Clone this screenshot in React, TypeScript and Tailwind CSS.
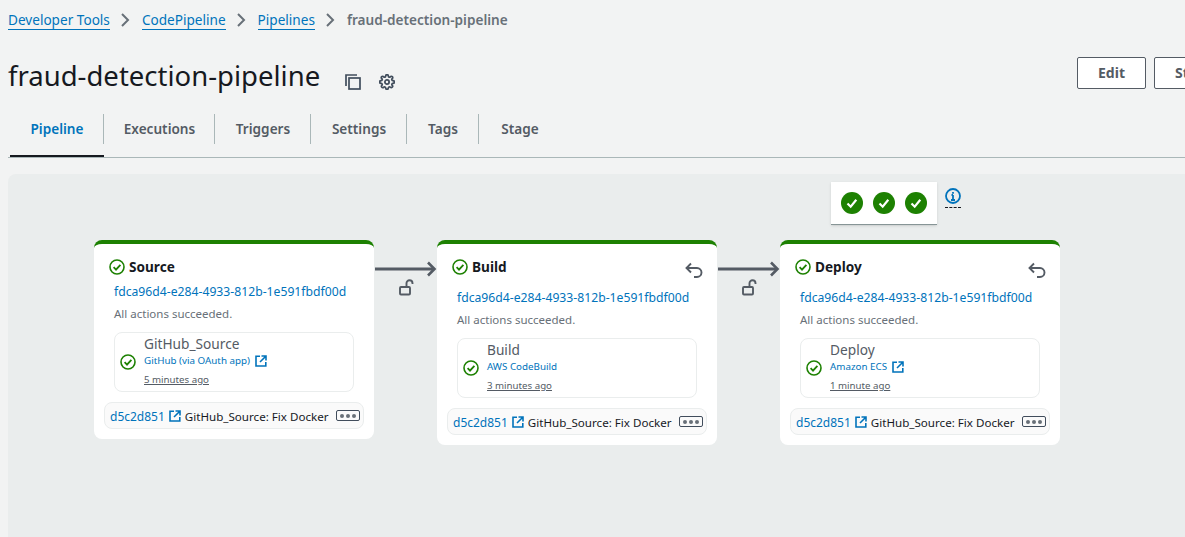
import React from "react";

const FONT = "font-['Noto_Sans','Open_Sans',sans-serif]";

const tabs = ["Pipeline", "Executions", "Triggers", "Settings", "Tags", "Stage"];
const tabWidths = ["w-[94px]", "w-[111px]", "w-[96px]", "w-[96px]", "w-[72px]", "w-[81px]"];

const stages = [
  { name: "Source", action: "GitHub_Source", provider: "GitHub (via OAuth app)", link: true, ago: "5 minutes ago", retry: false },
  { name: "Build", action: "Build", provider: "AWS CodeBuild", link: false, ago: "3 minutes ago", retry: true },
  { name: "Deploy", action: "Deploy", provider: "Amazon ECS", link: true, ago: "1 minute ago", retry: true },
];

const Chevron = () => (
  <svg width="16" height="16" viewBox="0 0 16 16" fill="none" stroke="#687078" strokeWidth="2" className="mx-[8px] shrink-0">
    <path d="M4 2l6 6-6 6" />
  </svg>
);

const CheckCircle = ({ size = 16 }: { size?: number }) => (
  <svg width={size} height={size} viewBox="0 0 16 16" fill="none" stroke="#1d8102" strokeWidth="1.6" className="shrink-0">
    <circle cx="8" cy="8" r="7" />
    <path d="M4.600 8.200l2.400 2.400 4.400-4.800" strokeWidth="1.800" />
  </svg>
);

const SolidCheck = () => (
  <svg width="22" height="22" viewBox="0 0 22 22" fill="none">
    <circle cx="11" cy="11" r="11" fill="#1d8102" />
    <path d="M6.500 11.500l3.200 3.200 5.600-7" stroke="#fff" strokeWidth="2.200" />
  </svg>
);

const External = () => (
  <svg width="12" height="12" viewBox="0 0 12 12" fill="none" stroke="#0073bb" strokeWidth="1.6" className="shrink-0">
    <path d="M5 1.200H1v9.800h9.800V7" />
    <path d="M6.500 1H11v4.500M10.800 1.200L5 7" />
  </svg>
);

const Undo = () => (
  <svg width="18" height="17" viewBox="0 0 18 17" fill="none" stroke="#545b64" strokeWidth="1.900">
    <path d="M6 1.500L1.500 6 6 10.500" />
    <path d="M1.500 6h10.500a4.500 4.500 0 0 1 0 9H9" />
  </svg>
);

const Lock = () => (
  <svg width="16" height="17" viewBox="0 0 16 17" fill="none" stroke="#545b64" strokeWidth="1.900">
    <rect x="1" y="8" width="10" height="7.500" rx="1" />
    <path d="M7.500 8V4.200a3 3 0 0 1 6 0V5" />
  </svg>
);

const Arrow = () => (
  <svg width="63" height="16" viewBox="0 0 63 16" fill="none" stroke="#545b64" strokeWidth="3">
    <path d="M1 8h59" />
    <path d="M54 1.500L60.500 8 54 14.500" strokeWidth="2.600" />
  </svg>
);

const StageCard = ({ stage }: { stage: (typeof stages)[number] }) => (
  <div className="w-[280px] shrink-0 rounded-lg border-t-4 border-[#1d8102] bg-white">
    <div className={`flex items-start pl-[15px] pr-[14px] pt-[15px] ${stage.retry ? "h-[42px]" : "h-[36px]"}`}>
      <CheckCircle />
      <span className="ml-[4px] text-[13.600px] leading-[16px] font-bold text-[#16191f]">{stage.name}</span>
      {stage.retry && (
        <span className="ml-auto mt-[3px]">
          <Undo />
        </span>
      )}
    </div>
    <div className="mt-[4px] pl-[20px] text-[12.200px] leading-[16px] whitespace-nowrap text-[#0073bb]">
      fdca96d4-e284-4933-812b-1e591fbdf00d
    </div>
    <div className="mt-[6px] pl-[20px] text-[11.500px] leading-[16px] text-[#687078]">All actions succeeded.</div>
    <div className="mx-[20px] mt-[10px] flex h-[60px] items-center rounded-lg border border-[#eaeded] pl-[5px]">
      <CheckCircle />
      <div className="ml-[8px] self-start pt-[2px]">
        <div className="mb-[1px] text-[13.700px] leading-[18px] text-[#545b64]">{stage.action}</div>
        <div className="flex items-center gap-[5px] text-[9.800px] leading-[14px] text-[#0073bb]">
          {stage.provider}
          {stage.link && <External />}
        </div>
        <div className="mt-[5px] text-[9.700px] leading-[14px] text-[#545b64] underline">{stage.ago}</div>
      </div>
    </div>
    <div className="mx-[10px] mb-[10px] mt-[10px] flex h-[27px] items-center rounded-lg border border-[#eaeded] bg-[#fafafa] pl-[5px]">
      <span className="pt-[2px] text-[12px] text-[#0073bb]">d5c2d851</span>
      <span className="ml-[4px]"><External /></span>
      <span className="ml-[4px] whitespace-nowrap pt-[2px] text-[11.600px] text-[#16191f]">GitHub_Source: Fix Docker</span>
      <span className="ml-auto mr-[3px] flex h-[11px] w-[24px] items-center justify-center gap-[2px] rounded-[2px] border border-[#414d5c]">
        <i className="size-[4px] rounded-full bg-[#687078]" />
        <i className="size-[4px] rounded-full bg-[#687078]" />
        <i className="size-[4px] rounded-full bg-[#687078]" />
      </span>
    </div>
  </div>
);

export default function App() {
  return (
    <div className={`${FONT} h-[537px] w-[1185px] overflow-hidden bg-[#f2f3f3]`}>
      <nav className="flex h-[40px] items-center pl-[8px] text-[13.600px]">
        <a className="border-b border-[#0073bb] leading-[18px] text-[#0073bb]">Developer Tools</a>
        <Chevron />
        <a className="border-b border-[#0073bb] leading-[18px] text-[#0073bb]">CodePipeline</a>
        <Chevron />
        <a className="border-b border-[#0073bb] leading-[18px] text-[#0073bb]">Pipelines</a>
        <Chevron />
        <span className="font-semibold text-[#687078]">fraud-detection-pipeline</span>
      </nav>

      <div className="flex h-[60px] w-[1300px] items-start">
        <div className="flex w-[1077px] shrink-0 items-center pl-[8px] pt-[17px]">
          <h1 className="text-[27.500px] leading-[38px] font-normal text-[#16191f]">fraud-detection-pipeline</h1>
          <svg width="16" height="16" viewBox="0 0 16 16" fill="none" stroke="#414d5c" strokeWidth="1.700" className="ml-[25px] mt-[12px]">
            <path d="M1 12V1h11" />
            <rect x="4" y="4" width="11" height="11" />
          </svg>
          <svg width="16" height="16" viewBox="0 0 24 24" fill="none" stroke="#414d5c" strokeWidth="2.600" className="ml-[18px] mt-[12px]">
            <circle cx="12" cy="12" r="3.200" />
            <path d="M19.400 15a1.700 1.700 0 0 0 .3 1.800l.1.1a2 2 0 1 1-2.900 2.900l-.1-.1a1.700 1.700 0 0 0-2.800 1.200v.1a2 2 0 1 1-4 0V21a1.700 1.700 0 0 0-2.900-1.200l-.1.1a2 2 0 1 1-2.800-2.900l.1-.1A1.700 1.700 0 0 0 3 14H3a2 2 0 1 1 0-4h.1a1.700 1.700 0 0 0 1.200-2.900l-.1-.1A2 2 0 1 1 7 4.200l.1.1a1.700 1.700 0 0 0 2.900-1.200V3a2 2 0 1 1 4 0v.1a1.700 1.700 0 0 0 2.900 1.200l.1-.1a2 2 0 1 1 2.800 2.800l-.1.1A1.700 1.700 0 0 0 21 10h.1a2 2 0 1 1 0 4H21a1.700 1.700 0 0 0-1.600 1z" />
          </svg>
        </div>
        <div className="flex gap-[8px] pt-[17px]">
          <button className="h-[32px] w-[69px] rounded-[2px] border border-[#545b64] bg-white pb-[2px] text-[14px] font-bold text-[#545b64]">Edit</button>
          <button className="h-[32px] w-[120px] rounded-[2px] border border-[#545b64] bg-white pb-[2px] pl-[20px] text-left text-[14px] font-bold whitespace-nowrap text-[#545b64]">Stop execution</button>
        </div>
      </div>

      <div className="ml-[8px] mt-[11px] flex h-[47px] items-start border-b border-[#aab7b8]">
        {tabs.map((tab, i) => (
          <div
            key={tab}
            className={`${tabWidths[i]} flex h-[46px] items-start justify-center pt-[3px] ${i === 0 ? "ml-[2px] border-b-2 border-[#16191f]" : ""}`}
          >
            <div className={`flex h-[30px] w-full items-center justify-center pl-[1px] text-[13.600px] leading-[16px] font-semibold ${i === 0 ? "text-[#0073bb]" : "text-[#545b64]"} ${i < tabs.length - 1 ? "border-r border-[#aab7b8]" : ""}`}>
              {tab}
            </div>
          </div>
        ))}
      </div>

      <div className="ml-[8px] mt-[16px] h-[400px] rounded-tl-lg bg-[#eaeded]">
        <div className="flex h-[66px] items-start pl-[823px] pt-[8px]">
          <div className="flex h-[43px] w-[106px] items-center justify-center gap-[10px] border-b border-[#879596] bg-white shadow-sm">
            <SolidCheck />
            <SolidCheck />
            <SolidCheck />
          </div>
          <div className="ml-[8px] mt-[6px] border-b border-dashed border-[#16191f] pb-[3px]">
            <svg width="16" height="16" viewBox="0 0 16 16" fill="none" stroke="#0073bb" strokeWidth="1.800">
              <circle cx="8" cy="8" r="7" />
              <path d="M8 7v5M6 12h4M8 4v1.800M6.500 7H8" />
            </svg>
          </div>
        </div>
        <div className="flex items-start pl-[86px]">
          {stages.map((stage, i) => (
            <React.Fragment key={stage.name}>
              <StageCard stage={stage} />
              {i < stages.length - 1 && (
                <div className="flex w-[63px] shrink-0 flex-col items-center pt-[21px]">
                  <Arrow />
                  <div className="ml-[2px] mt-[2px]">
                    <Lock />
                  </div>
                </div>
              )}
            </React.Fragment>
          ))}
        </div>
      </div>
    </div>
  );
}
